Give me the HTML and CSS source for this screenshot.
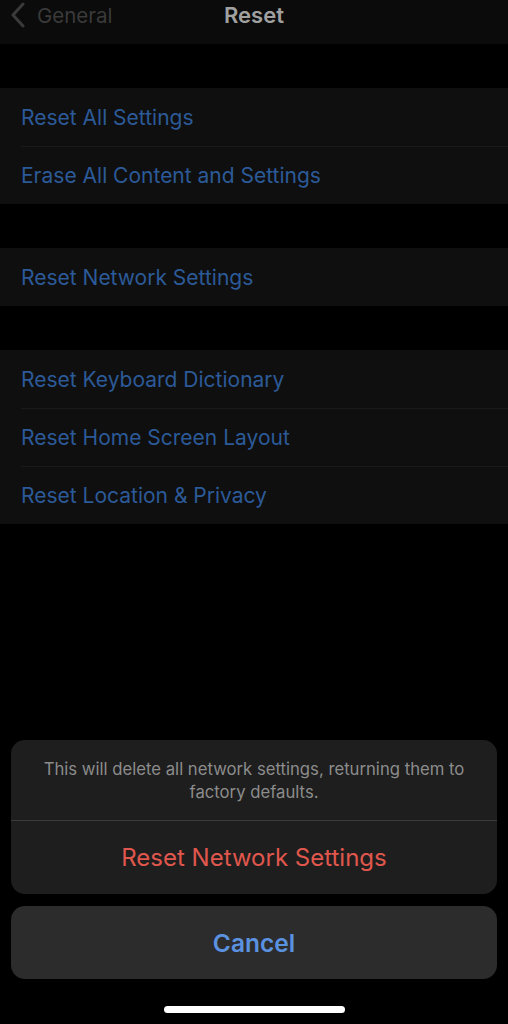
FILE: index.html
```html
<!DOCTYPE html>
<html lang="en">
<head>
    <meta charset="UTF-8">
    <meta name="viewport" content="width=device-width, initial-scale=1.0">
    <title>Reset</title>
    <link rel="stylesheet" href="styles.css">
</head>
<body>
    <div class="screen">
        <div class="nav">
            <div class="back">
                <svg width="18" height="26" viewBox="0 0 18 26"><path d="M14 2 L4 13 L14 24" fill="none" stroke="#3a3a3a" stroke-width="3" stroke-linecap="round" stroke-linejoin="round"/></svg>
                <span>General</span>
            </div>
            <div class="title">Reset</div>
        </div>

        <ul class="group">
            <li>Reset All Settings</li>
            <li>Erase All Content and Settings</li>
        </ul>
        <ul class="group">
            <li>Reset Network Settings</li>
        </ul>
        <ul class="group">
            <li>Reset Keyboard Dictionary</li>
            <li>Reset Home Screen Layout</li>
            <li>Reset Location &amp; Privacy</li>
        </ul>

        <div class="spacer"></div>

        <div class="sheet">
            <div class="alert">
                <p class="msg">This will delete all network settings, returning them to factory defaults.</p>
                <div class="danger">Reset Network Settings</div>
            </div>
            <div class="cancel">Cancel</div>
        </div>

        <div class="home"><span></span></div>
    </div>
</body>
</html>
```

FILE: styles.css
```css
*{
    padding: 0;
    margin: 0;
    box-sizing: border-box;
}
ul{
    list-style: none;
}
body{
    background-color: #000;
    font-family: Inter, "Liberation Sans", sans-serif;
}
.screen{
    width: 508px;
    height: 1024px;
    display: flex;
    flex-direction: column;
}
.nav{
    height: 44px;
    background-color: #0b0b0b;
    position: relative;
    display: flex;
    align-items: center;
    justify-content: center;
}
.nav .back{
    position: absolute;
    left: 9px;
    top: 2px;
    display: flex;
    align-items: center;
    gap: 10px;
    color: #3a3a3a;
    font-size: 20.5px;
}
.nav .title{
    color: #a0a0a0;
    font-size: 22px;
    font-weight: 600;
    margin-top: -14px;
}
.group{
    margin-top: 44px;
    background-color: #0f0f0f;
}
.group li{
    height: 58px;
    display: flex;
    align-items: center;
    padding-left: 21px;
    padding-top: 1px;
    color: #2c5a98;
    font-size: 21px;
}
/* separator starts under the text, not at the edge */
.group li + li{
    background-image: linear-gradient(#1a1a1a, #1a1a1a);
    background-repeat: no-repeat;
    background-position: 21px 0;
    background-size: 100% 1px;
}
.spacer{
    flex: 1;
}
.sheet{
    padding: 0 11px;
}
.alert{
    background-color: #1e1e1e;
    border-radius: 14px;
    overflow: hidden;
}
.alert .msg{
    height: 81px;
    padding: 18px 16px 0;
    text-align: center;
    color: #8c8c8c;
    font-size: 16.7px;
    line-height: 23px;
    border-bottom: 1px solid #3a3a3a;
}
.alert .danger{
    height: 73px;
    display: flex;
    align-items: center;
    justify-content: center;
    color: #e0574d;
    font-size: 24px;
}
.cancel{
    margin-top: 12px;
    height: 73px;
    background-color: #2c2c2c;
    border-radius: 14px;
    display: flex;
    align-items: center;
    justify-content: center;
    color: #5b92e0;
    font-size: 24.5px;
    font-weight: 600;
}
.home{
    height: 45px;
    display: flex;
    justify-content: center;
    padding-top: 27px;
}
.home span{
    display: block;
    width: 181px;
    height: 7px;
    border-radius: 4px;
    background-color: #fff;
}
```
